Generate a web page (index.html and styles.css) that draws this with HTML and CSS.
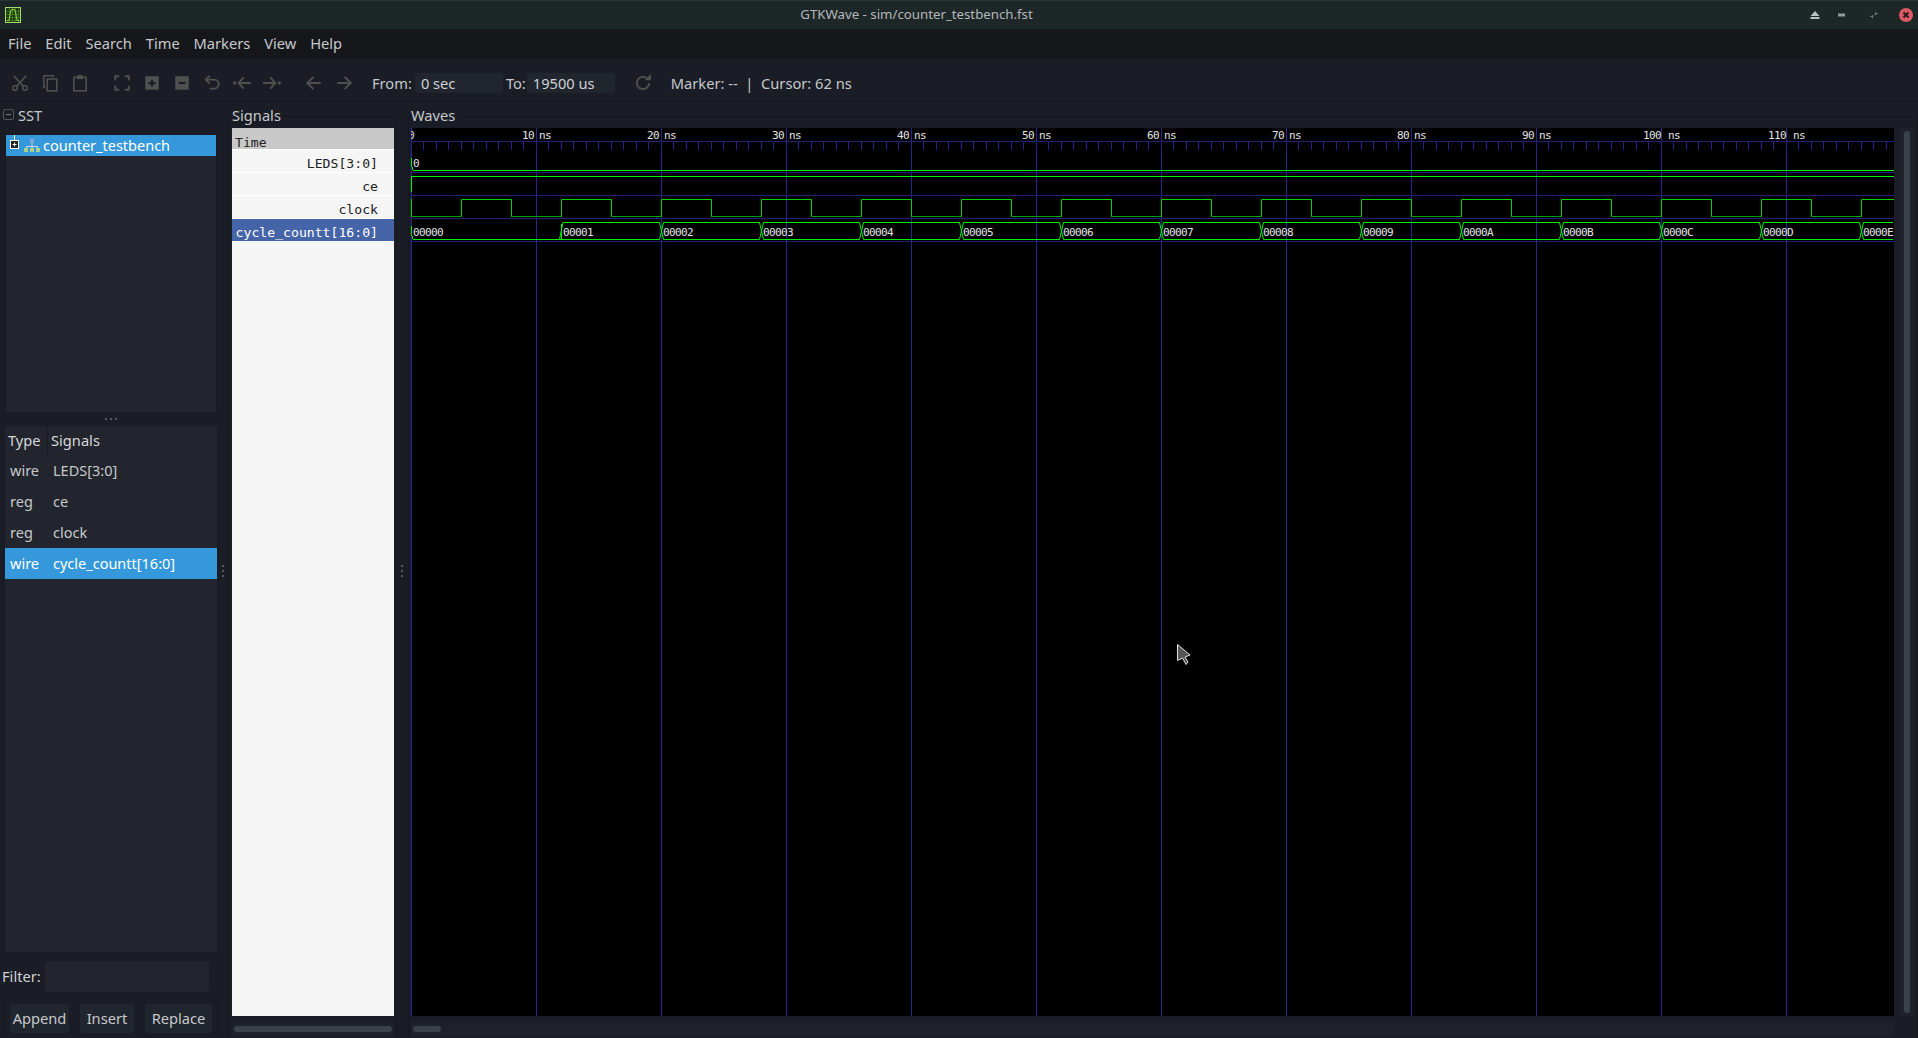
FILE: index.html
```html
<!DOCTYPE html>
<html lang="en">
<head>
    <meta charset="UTF-8">
    <title>GTKWave - sim/counter_testbench.fst</title>
    <link rel="stylesheet" href="styles.css">
</head>
<body>
    <div class="titlebar">
        <svg class="app-icon" width="16" height="16" viewBox="0 0 16 16">
            <rect x="0.5" y="0.5" width="15" height="15" fill="#1f3a12" stroke="#a5dc6e"/>
            <path d="M1 4.5H15M1 7.5H15M1 10.5H15M1 13.5H15M4.5 1V15M7.5 1V15M10.5 1V15M13.5 1V15" stroke="#3f6d20"/>
            <path d="M2 13.5H4L5.5 5L6.5 2.5H9.5L10.5 5L12 13.5H14" fill="none" stroke="#8ce03c"/>
        </svg>
        <div class="window-title">GTKWave - sim/counter_testbench.fst</div>
        <div class="window-buttons">
            <svg width="10" height="10" viewBox="0 0 10 10" class="btn-eject"><path d="M5 1L9.5 6H0.5Z M0.5 7H9.5V9H0.5Z" fill="#b4c2c2"/></svg>
            <svg width="8" height="4" viewBox="0 0 8 4" class="btn-min"><rect width="7" height="3" y="0.5" fill="#8f9c9c"/></svg>
            <svg width="10" height="10" viewBox="0 0 10 10" class="btn-max"><path d="M6.5 0L5.5 5L9.5 3.5L6.5 3ZM3.5 10L4.5 5L0.5 6.5L3.5 7Z" fill="#7f8b8b"/></svg>
            <svg width="14" height="14" viewBox="0 0 14 14" class="btn-close"><circle cx="7" cy="7" r="7" fill="#dc5a64"/><path d="M4.5 4.5L9.5 9.5M9.5 4.5L4.5 9.5" stroke="#2a1a1c" stroke-width="2"/></svg>
        </div>
    </div>

    <div class="menubar">
        <span class="menu-item">File</span>
        <span class="menu-item">Edit</span>
        <span class="menu-item">Search</span>
        <span class="menu-item">Time</span>
        <span class="menu-item">Markers</span>
        <span class="menu-item">View</span>
        <span class="menu-item">Help</span>
    </div>

    <div class="toolbar">
        <div class="tool-group">
            <svg class="tool" viewBox="0 0 16 16"><circle cx="3.5" cy="12.5" r="2" class="line"/><circle cx="12.5" cy="12.5" r="2" class="line"/><path d="M5 11L13.5 1.5M11 11L2.5 1.5" class="line"/></svg>
            <svg class="tool" viewBox="0 0 16 16"><path d="M11 3V1.5H2.5V12H4" class="line"/><rect x="5.5" y="4.5" width="8.5" height="10.5" class="line"/></svg>
            <svg class="tool" viewBox="0 0 16 16"><rect x="2.5" y="3" width="11" height="12" class="line"/><rect x="5.5" y="1" width="5" height="3.5" class="solid"/></svg>
        </div>
        <div class="tool-group">
            <svg class="tool" viewBox="0 0 16 16"><path d="M2 5.5V2H5.5M10.5 2H14V5.5M14 10.5V14H10.5M5.5 14H2V10.5" class="line thick"/></svg>
            <svg class="tool" viewBox="0 0 16 16"><rect x="2" y="2" width="12" height="12" class="solid"/><path d="M8 5V11M5 8H11" class="cut"/></svg>
            <svg class="tool" viewBox="0 0 16 16"><rect x="2" y="2" width="12" height="12" class="solid"/><path d="M5 8H11" class="cut"/></svg>
            <svg class="tool" viewBox="0 0 16 16"><path d="M2.5 5H10A3.8 3.8 0 0 1 10 13H6" class="line thick"/><path d="M6 1.5L2.5 5L6 8.5" class="line thick"/></svg>
            <svg class="tool" viewBox="0 0 16 16"><circle cx="1.5" cy="8" r="1.5" class="solid"/><path d="M5 8H16M9.5 3L5 8L9.5 13" class="line thick"/></svg>
            <svg class="tool" viewBox="0 0 16 16"><circle cx="14.5" cy="8" r="1.5" class="solid"/><path d="M0 8H11M6.5 3L11 8L6.5 13" class="line thick"/></svg>
        </div>
        <div class="tool-group nav-group">
            <svg class="tool" viewBox="0 0 16 16"><path d="M2 8H14M7.5 2.5L2 8L7.5 13.5" class="line thick"/></svg>
            <svg class="tool" viewBox="0 0 16 16"><path d="M2 8H14M8.5 2.5L14 8L8.5 13.5" class="line thick"/></svg>
        </div>
        <span class="time-label from-label">From:</span>
        <div class="time-input">0 sec</div>
        <span class="time-label to-label">To:</span>
        <div class="time-input">19500 us</div>
        <svg class="tool reload" viewBox="0 0 16 16"><path d="M13.5 8A5.5 5.5 0 1 1 11.5 3.7" class="line thick"/><path d="M9.5 5.5H15V0Z" class="solid"/></svg>
        <span class="status-text">Marker: --&nbsp; |&nbsp; Cursor: 62 ns</span>
    </div>

    <div class="panes">
        <div class="left-col">
            <div class="pane-label sst-label"><span class="collapse-box"></span>SST</div>
            <div class="tree-box">
                <div class="tree-row">
                    <svg class="expander" width="13" height="21" viewBox="0 0 13 21">
                        <path d="M6.5 0V5" stroke="#fff"/>
                        <rect x="2.5" y="5.5" width="8" height="8" fill="#222" stroke="#fff"/>
                        <path d="M4.5 9.5H8.5M6.5 7.5V11.5" stroke="#fff"/>
                    </svg>
                    <svg class="tree-icon" width="16" height="14" viewBox="0 0 16 14">
                        <rect x="6" y="0" width="4" height="4" fill="#7fa8d8"/>
                        <path d="M8 4V7M2.5 9V7.5H13.5V9M8 7V9" stroke="#cfd8e0" fill="none"/>
                        <rect x="0" y="9" width="4" height="4" fill="#a5d08a"/>
                        <rect x="6" y="9" width="4" height="4" fill="#a5d08a"/>
                        <rect x="12" y="9" width="4" height="4" fill="#a5d08a"/>
                    </svg>
                    <span class="tree-text">counter_testbench</span>
                </div>
            </div>
            <div class="h-handle"><i></i><i></i><i></i></div>
            <div class="signal-table">
                <div class="table-head">
                    <div class="head-type">Type</div>
                    <div class="head-name">Signals</div>
                </div>
                <div class="table-row"><span class="cell-type">wire</span><span>LEDS[3:0]</span></div>
                <div class="table-row"><span class="cell-type">reg</span><span>ce</span></div>
                <div class="table-row"><span class="cell-type">reg</span><span>clock</span></div>
                <div class="table-row selected"><span class="cell-type">wire</span><span>cycle_countt[16:0]</span></div>
            </div>
            <div class="filter-row">
                <span class="filter-label">Filter:</span>
                <div class="filter-input"></div>
            </div>
            <div class="button-row">
                <div class="push-btn btn-append">Append</div>
                <div class="push-btn btn-insert">Insert</div>
                <div class="push-btn btn-replace">Replace</div>
            </div>
        </div>

        <div class="v-handle"><i></i><i></i><i></i></div>

        <div class="signals-col">
            <div class="pane-label">Signals</div>
            <div class="frame">
                <div class="signal-list">
                    <div class="sig time-row">Time</div>
                    <div class="sig">LEDS[3:0]</div>
                    <div class="sig">ce</div>
                    <div class="sig">clock</div>
                    <div class="sig sig-selected">cycle_countt[16:0]</div>
                </div>
                <div class="h-scroll sig-h-scroll"><div class="thumb sig-thumb"></div></div>
            </div>
        </div>

        <div class="v-handle"><i></i><i></i><i></i></div>

        <div class="waves-col">
            <div class="pane-label">Waves</div>
            <div class="frame">
                <div class="wave-area">
                    <div class="wave-main">
                        <svg class="wave-svg" width="1483" height="888" viewBox="0 0 1483 888">
                            <defs>
                                <pattern id="ticks" x="0" y="14" width="25" height="8" patternUnits="userSpaceOnUse">
                                    <path d="M0.5 0V8M12.5 0V8" stroke="#20208a"/>
                                </pattern>
                                <pattern id="majors" x="0" y="0" width="125" height="888" patternUnits="userSpaceOnUse">
                                    <path d="M0.5 0V888" stroke="#26268c"/>
                                </pattern>
                            </defs>
                            <rect width="1483" height="888" fill="#000"/>
                            <rect width="1483" height="888" fill="url(#majors)"/>
                            <path d="M0 13.5H1483M0 44.5H1483M0 67.5H1483M0 90.5H1483M0 113.5H1483" stroke="#20207a"/>
                            <rect y="14" width="1483" height="8" fill="url(#ticks)"/>

                            <g class="labels">
                                <text x="-3" y="11">0</text>
                                <text x="111" y="11">10</text><text x="128" y="11">ns</text>
                                <text x="236" y="11">20</text><text x="253" y="11">ns</text>
                                <text x="361" y="11">30</text><text x="378" y="11">ns</text>
                                <text x="486" y="11">40</text><text x="503" y="11">ns</text>
                                <text x="611" y="11">50</text><text x="628" y="11">ns</text>
                                <text x="736" y="11">60</text><text x="753" y="11">ns</text>
                                <text x="861" y="11">70</text><text x="878" y="11">ns</text>
                                <text x="986" y="11">80</text><text x="1003" y="11">ns</text>
                                <text x="1111" y="11">90</text><text x="1128" y="11">ns</text>
                                <text x="1232" y="11">100</text><text x="1257" y="11">ns</text>
                                <text x="1357" y="11">110</text><text x="1382" y="11">ns</text>
                            </g>

                            <!-- LEDS -->
                            <path d="M0.5 30V39M1.5 39V42M2 42.5H1483" class="wave"/>
                            <!-- ce -->
                            <path d="M0.5 64V48.5H1483" class="wave"/>
                            <!-- clock -->
                            <path d="M0.5 71V88.5H50.5V71.5H100.5V88.5H150.5V71.5H200.5V88.5H250.5V71.5H300.5V88.5H350.5V71.5H400.5V88.5H450.5V71.5H500.5V88.5H550.5V71.5H600.5V88.5H650.5V71.5H700.5V88.5H750.5V71.5H800.5V88.5H850.5V71.5H900.5V88.5H950.5V71.5H1000.5V88.5H1050.5V71.5H1100.5V88.5H1150.5V71.5H1200.5V88.5H1250.5V71.5H1300.5V88.5H1350.5V71.5H1400.5V88.5H1450.5V71.5H1483" class="wave-mid"/>
                            <path d="M1 88.5H50M101 88.5H150M201 88.5H250M301 88.5H350M401 88.5H450M501 88.5H550M601 88.5H650M701 88.5H750M801 88.5H850M901 88.5H950M1001 88.5H1050M1101 88.5H1150M1201 88.5H1250M1301 88.5H1350M1401 88.5H1450" class="wave-low"/>
                            <!-- cycle_countt -->
                            <path d="M0.5 98V108M1.5 108V111M2 111.5H148.5L152 94.5M150.5 96V112" class="wave"/>
                            <path d="M148.5 111.5L152 111.5H248.5L252.5 94.5H348.5L352.5 111.5H448.5L452.5 94.5H548.5L552.5 111.5H648.5L652.5 94.5H748.5L752.5 111.5H848.5L852.5 94.5H948.5L952.5 111.5H1048.5L1052.5 94.5H1148.5L1152.5 111.5H1248.5L1252.5 94.5H1348.5L1352.5 111.5H1448.5L1452.5 94.5H1482" class="wave"/>
                            <path d="M152 94.5H248.5L252.5 111.5H348.5L352.5 94.5H448.5L452.5 111.5H548.5L552.5 94.5H648.5L652.5 111.5H748.5L752.5 94.5H848.5L852.5 111.5H948.5L952.5 94.5H1048.5L1052.5 111.5H1148.5L1152.5 94.5H1248.5L1252.5 111.5H1348.5L1352.5 94.5H1448.5L1452.5 111.5H1482" class="wave"/>

                            <g class="labels">
                                <text x="2" y="39">0</text>
                                <text x="2" y="108">00000</text>
                                <text x="152" y="108">00001</text>
                                <text x="252" y="108">00002</text>
                                <text x="352" y="108">00003</text>
                                <text x="452" y="108">00004</text>
                                <text x="552" y="108">00005</text>
                                <text x="652" y="108">00006</text>
                                <text x="752" y="108">00007</text>
                                <text x="852" y="108">00008</text>
                                <text x="952" y="108">00009</text>
                                <text x="1052" y="108">0000A</text>
                                <text x="1152" y="108">0000B</text>
                                <text x="1252" y="108">0000C</text>
                                <text x="1352" y="108">0000D</text>
                                <text x="1452" y="108">0000E</text>
                            </g>

                            <!-- mouse pointer -->
                            <path d="M766.5 516.5V532.5L771.5 530L775 536.5L777 534L774 529L779 527Z" fill="#555" stroke="#e0e0e0"/>
                        </svg>
                    </div>
                    <div class="v-scroll"><div class="thumb wave-v-thumb"></div></div>
                </div>
                <div class="h-scroll wave-h-scroll"><div class="thumb wave-thumb"></div></div>
            </div>
        </div>
    </div>
</body>
</html>
```
FILE: styles.css
```css
* {
    box-sizing: border-box;
}
html, body {
    height: 100%;
}
body {
    margin: 0;
    height: 1038px;
    overflow: hidden;
    display: flex;
    flex-direction: column;
    background: #1a1d25;
    color: #cfd2d6;
    font-family: "Noto Sans", sans-serif;
    font-size: 14.67px;
}

/* title bar */
.titlebar {
    height: 29px;
    flex: none;
    display: flex;
    align-items: center;
    background: #1e2728;
    border-top: 1px solid #2c3536;
    padding-left: 5px;
}
.window-title {
    flex: 1;
    text-align: center;
    font-size: 13.25px;
    color: #b3b8b8;
    padding-left: 2px;
    padding-bottom: 2px;
}
.window-buttons {
    display: flex;
    align-items: center;
    padding-right: 5px;
}
.btn-eject {
    margin-right: 18px;
}
.btn-min {
    margin-right: 23px;
}
.btn-max {
    margin-right: 20px;
}

/* menu */
.menubar {
    height: 29px;
    flex: none;
    display: flex;
    align-items: center;
    background: #16171b;
    padding-left: 8px;
    padding-bottom: 2px;
    gap: 13.9px;
    color: #c6c9cc;
}

/* toolbar */
.toolbar {
    height: 44px;
    flex: none;
    display: flex;
    align-items: center;
    background: #1a1d25;
    border-bottom: 1px solid #14161b;
    padding-left: 11px;
    padding-top: 6px;
}
.tool-group {
    display: flex;
    gap: 12px;
    margin-right: 24px;
}
.nav-group {
    margin-right: 19px;
}
.tool {
    width: 18px;
    height: 18px;
    flex: none;
}
.tool .line {
    fill: none;
    stroke: #505050;
    stroke-width: 1.4;
}
.tool .thick {
    stroke-width: 1.7;
}
.tool .solid {
    fill: #505050;
}
.tool .cut {
    fill: none;
    stroke: #1a1d25;
    stroke-width: 2;
}
.time-label {
    color: #c6c9cc;
}
.from-label {
    margin-right: 3px;
}
.to-label {
    margin-right: 1px;
}
.time-input {
    width: 88px;
    height: 20px;
    margin-right: 3px;
    padding-left: 6px;
    line-height: 21px;
    background: #21252d;
    border-radius: 3px;
    color: #cfd2d6;
}
.reload {
    margin-left: 16px;
    margin-right: 19px;
}
.status-text {
    color: #c6c9cc;
}

/* panes */
.panes {
    flex: 1;
    display: flex;
    min-height: 0;
}
.left-col {
    width: 218px;
    flex: none;
    display: flex;
    flex-direction: column;
}
.pane-label {
    height: 26px;
    flex: none;
    line-height: 26px;
    color: #c6c9cc;
    position: relative;
    width: fit-content;
    padding-right: 3px;
    background: #1a1d25;
}
.sst-label {
    height: 25px;
    display: flex;
    align-items: center;
    padding-left: 3px;
}
.collapse-box {
    width: 11px;
    height: 11px;
    margin-right: 4px;
    border: 1px solid #555;
    border-radius: 2px;
    position: relative;
}
.collapse-box::after {
    content: "";
    position: absolute;
    left: 2px;
    top: 4px;
    width: 5px;
    height: 1px;
    background: #777;
}
.tree-box {
    height: 279px;
    flex: none;
    margin: 7px 0 0 5px;
    width: 212px;
    background: #22252d;
    border: 1px solid #191b21;
}
.tree-row {
    height: 21px;
    display: flex;
    align-items: center;
    background: #3498db;
    color: #fff;
    font-size: 14.5px;
}
.tree-text {
    padding-bottom: 2px;
}
.expander {
    margin-left: 2px;
    margin-right: 3px;
}
.tree-icon {
    margin-right: 3px;
}
.h-handle {
    height: 13px;
    flex: none;
    display: flex;
    justify-content: center;
    align-items: center;
    gap: 3px;
    padding-left: 4px;
    padding-bottom: 1px;
}
.h-handle i, .v-handle i {
    display: block;
    width: 2px;
    height: 2px;
    background: #555a60;
}
.signal-table {
    height: 527px;
    flex: none;
    margin-left: 5px;
    width: 212px;
    background: #22252d;
    border-bottom: 1px solid #191b21;
}
.table-head {
    height: 29px;
    display: flex;
    color: #d6d8da;
}
.head-type {
    width: 43px;
    padding-left: 3px;
    line-height: 29px;
    border-right: 1px solid #191b21;
}
.head-name {
    flex: 1;
    padding-left: 3px;
    line-height: 29px;
}
.table-row {
    height: 31px;
    display: flex;
    align-items: center;
    padding-bottom: 2px;
    color: #c6c9cc;
    font-size: 14.5px;
}
.cell-type {
    width: 48px;
    padding-left: 5px;
}
.table-row.selected {
    background: #3498db;
    color: #fff;
}
.filter-row {
    height: 31px;
    flex: none;
    margin-top: 8px;
    display: flex;
    align-items: center;
    padding-left: 2px;
    gap: 4px;
}
.filter-label {
    padding-bottom: 2px;
}
.filter-input {
    width: 164px;
    height: 31px;
    background: #22252d;
    border-radius: 3px;
}
.button-row {
    display: flex;
    flex: none;
    height: 37px;
    margin: 7px 0 0 4px;
    width: 214px;
    padding: 4px 5px;
    border: 1px solid #191b21;
    border-bottom: none;
}
.push-btn {
    height: 29px;
    line-height: 29px;
    text-align: center;
    background: #21252d;
    border-radius: 2px;
    color: #c6c9cc;
}
.btn-append {
    width: 59px;
    margin-right: 11px;
}
.btn-insert {
    width: 54px;
    margin-right: 11px;
}
.btn-replace {
    width: 67px;
}

.v-handle {
    width: 10px;
    flex: none;
    display: flex;
    flex-direction: column;
    justify-content: center;
    align-items: center;
    gap: 3px;
    padding-top: 2px;
}

/* signal names */
.signals-col {
    width: 169px;
    flex: none;
    display: flex;
    flex-direction: column;
    padding-left: 4px;
    position: relative;
}
.signals-col::before, .waves-col::before {
    content: "";
    position: absolute;
    top: 14px;
    left: 1px;
    right: 0;
    bottom: 0;
    border: 1px solid #15171d;
    border-bottom: none;
}
.frame {
    display: flex;
    flex-direction: column;
    position: relative;
}
.signal-list {
    height: 888px;
    width: 162px;
    background: #f5f5f5;
    font-family: "DejaVu Sans Mono", monospace;
    font-size: 13.15px;
    color: #222;
}
.sig {
    height: 23px;
    line-height: 27px;
    text-align: right;
    padding-right: 16px;
    border-bottom: 1px solid #fff;
    overflow: hidden;
}
.time-row {
    height: 22px;
    line-height: 30px;
    text-align: left;
    padding-left: 3px;
    background: #c8c8c8;
}
.sig-selected {
    height: 22px;
    background: #4565a8;
    color: #fff;
    border-bottom: none;
}
.h-scroll {
    height: 14px;
    margin-top: 6px;
    padding-top: 4px;
    background: #1e2129;
}
.sig-h-scroll {
    width: 162px;
}
.thumb {
    background: #3b4148;
    border-radius: 3px;
}
.sig-thumb {
    height: 6px;
    margin: 0 2px;
}

/* waves */
.waves-col {
    flex: 1;
    display: flex;
    flex-direction: column;
    min-width: 0;
    padding-left: 4px;
    position: relative;
}
.wave-area {
    display: flex;
}
.wave-main {
    width: 1483px;
    height: 888px;
    flex: none;
}
.wave-svg {
    display: block;
}
.wave {
    fill: none;
    stroke: #00f000;
}
.wave-mid {
    fill: none;
    stroke: #00d400;
}
.wave-low {
    fill: none;
    stroke: #00a000;
}
.labels text {
    font-family: "DejaVu Sans Mono", monospace;
    font-size: 11px;
    letter-spacing: -0.62px;
    fill: #e4e4e4;
}
.v-scroll {
    width: 13px;
    margin-left: 6px;
    padding: 3px 3px 3px 4px;
    background: #1e2129;
}
.wave-v-thumb {
    height: 100%;
}
.wave-h-scroll {
    width: 1483px;
}
.wave-thumb {
    width: 28px;
    height: 6px;
    margin-left: 2px;
}
```
